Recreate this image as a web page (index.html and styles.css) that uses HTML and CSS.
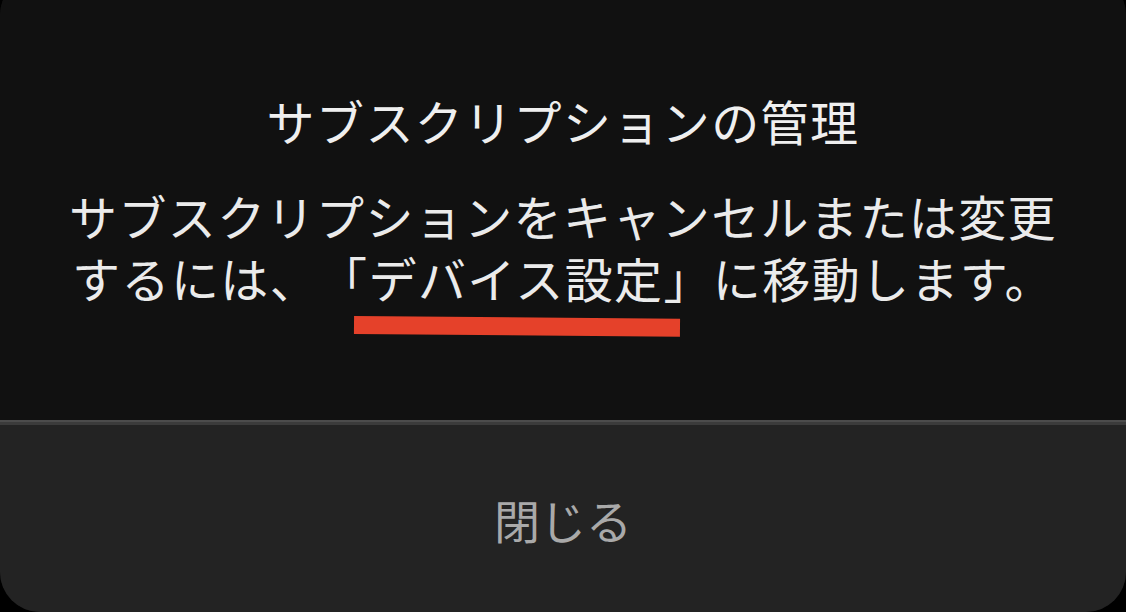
FILE: index.html
```html
<!DOCTYPE html>
<html lang="ja">
<head>
<meta charset="utf-8">
<link rel="stylesheet" href="styles.css">
</head>
<body>
<div class="dialog">
  <div class="dialog-top">
    <h1 class="title">サブスクリプションの管理</h1>
    <div class="message">
      <p class="message-text">サブスクリプションをキャンセルまたは変更<br>するには、「デバイス設定」に移動します。</p>
      <span class="highlight"></span>
    </div>
  </div>
  <div class="divider"></div>
  <div class="dialog-bottom">
    <span class="close-label">閉じる</span>
  </div>
</div>
</body>
</html>
```

FILE: styles.css
```css
html, body {
  margin: 0;
  padding: 0;
  background: #000;
  height: 100%;
  overflow: hidden;
}

body {
  font-family: "Noto Sans CJK JP", "Noto Sans", sans-serif;
  text-spacing-trim: space-all;
}

.dialog {
  margin-top: -25px;
  height: 637px;
  display: flex;
  flex-direction: column;
  border-radius: 40px;
  overflow: hidden;
  background: #111111;
}

.dialog-top {
  height: 445px;
  box-sizing: border-box;
  padding-top: 114px;
  background: #111111;
}

.title {
  margin: 0;
  font-size: 48px;
  font-weight: 400;
  line-height: 62px;
  letter-spacing: 1.4px;
  color: #efefef;
  text-align: center;
}

.message {
  position: relative;
  margin-top: 33px;
}

.message-text {
  margin: 0;
  font-size: 48px;
  font-weight: 400;
  line-height: 62px;
  letter-spacing: 1.4px;
  color: #ebebeb;
  text-align: center;
}

.highlight {
  position: absolute;
  left: 354px;
  top: 132px;
  width: 326px;
  height: 18px;
  background: #e5412a;
  transform: rotate(0.5deg);
  transform-origin: left center;
}

.divider {
  height: 5px;
  background: linear-gradient(#4c4c4c 0 2px, #3b3b3b 2px 5px);
}

.dialog-bottom {
  flex: 1;
  display: flex;
  align-items: center;
  justify-content: center;
  background: #232323;
}

.close-label {
  font-size: 46px;
  font-weight: 400;
  line-height: 60px;
  color: #a9a9a9;
}
```
